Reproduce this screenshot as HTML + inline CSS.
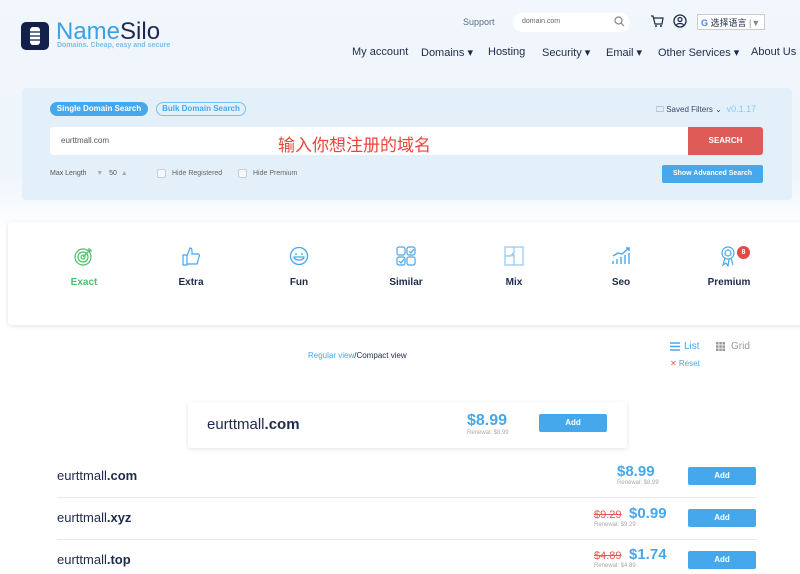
<!DOCTYPE html>
<html><head><meta charset="utf-8"><style>
*{box-sizing:border-box;margin:0;padding:0}
body{width:800px;height:574px;overflow:hidden;background:#fff;font-family:"Liberation Sans","Noto Sans CJK SC",sans-serif;color:#1e2a4a;position:relative}
.a{position:absolute;white-space:nowrap}
.hdr{position:absolute;left:0;top:0;width:800px;height:230px;background:linear-gradient(180deg,#f1f7fc 0%,#eef5fb 75%,#fff 100%)}
.nav{font-size:11px;top:46px}
.panel{left:22px;top:88px;width:770px;height:112px;background:#e4f0f9;border-radius:4px}
.btn{background:#46a8ec;color:#fff;font-weight:bold;text-align:center;border-radius:2px}
.lbl{font-size:10px;font-weight:bold;top:277px;text-align:center;width:80px}
.dom{font-size:13px}
.dom b{font-weight:bold}
.pr{color:#46a8ec;font-size:15px;font-weight:bold}
.ren{font-size:6px;color:#aaa}
.old{color:#e05a55;text-decoration:line-through;font-size:11px}
.sep{left:57px;width:700px;height:1px;background:#e6e9ee}
</style></head><body>
<div class="hdr"></div>
<div class="a" style="left:21px;top:22px;width:28px;height:28px;background:#12214a;border-radius:5px"></div>
<svg class="a" style="left:27px;top:26px" width="16" height="20"><rect x="3" y="1" width="10" height="18" rx="3" fill="#fff"/><path d="M3 6h10M3 10h10M3 14h10" stroke="#12214a" stroke-width="1.2"/></svg>
<div class="a" style="left:56px;top:18px;font-size:24px;color:#3aa0e8">Name<span style="color:#1c2a52">Silo</span></div>
<div class="a" style="left:57px;top:42px;font-size:7px;color:#7cbcec;font-weight:bold">Domains. Cheap, easy and secure</div>
<div class="a" style="left:463px;top:17px;font-size:9px;color:#5a6a85">Support</div>
<div class="a" style="left:513px;top:13px;width:117px;height:19px;background:#fff;border-radius:10px"></div>
<div class="a" style="left:522px;top:18px;font-size:7px;color:#666">domain.com</div>
<svg class="a" style="left:614px;top:16px" width="11" height="11"><circle cx="4.5" cy="4.5" r="3.5" stroke="#888" fill="none" stroke-width="1.2"/><path d="M7 7l3 3" stroke="#888" stroke-width="1.2"/></svg>
<svg class="a" style="left:650px;top:14px" width="14" height="14"><path d="M1 2h2l2 8h7l1-6H4" fill="none" stroke="#1e2a4a" stroke-width="1.2"/><circle cx="6" cy="12" r="1" fill="#1e2a4a"/><circle cx="11" cy="12" r="1" fill="#1e2a4a"/></svg>
<svg class="a" style="left:673px;top:14px" width="14" height="14"><circle cx="7" cy="7" r="6" stroke="#1e2a4a" fill="none" stroke-width="1.3"/><circle cx="7" cy="5.5" r="2" stroke="#1e2a4a" fill="none" stroke-width="1.2"/><path d="M3.5 11c1-2 6-2 7 0" stroke="#1e2a4a" fill="none" stroke-width="1.2"/></svg>
<div class="a" style="left:697px;top:14px;width:68px;height:16px;background:#fff;border:1px solid #ccc;font-size:9px;padding:1px 0 0 3px"><span style="color:#4285f4;font-weight:bold">G</span> 选择语言 <span style="color:#888">|▼</span></div>
<div class="a nav" style="left:352px">My account</div>
<div class="a nav" style="left:421px">Domains ▾</div>
<div class="a nav" style="left:488px">Hosting</div>
<div class="a nav" style="left:542px">Security ▾</div>
<div class="a nav" style="left:606px">Email ▾</div>
<div class="a nav" style="left:658px">Other Services ▾</div>
<div class="a nav" style="left:751px">About Us</div>
<div class="a panel"></div>
<div class="a" style="left:50px;top:102px;width:98px;height:14px;background:#46a8ec;border-radius:8px;color:#fff;font-size:8px;font-weight:bold;text-align:center;line-height:14px">Single Domain Search</div>
<div class="a" style="left:156px;top:102px;width:90px;height:14px;border:1px solid #7cc0f0;border-radius:8px;color:#46a8ec;font-size:8px;font-weight:bold;text-align:center;line-height:12px">Bulk Domain Search</div>
<div class="a" style="left:656px;top:104px;font-size:8px;color:#3a4a66">🗀 Saved Filters ⌄ <span style="color:#8cc8f0;font-size:9px">&nbsp;v0.1.17</span></div>
<div class="a" style="left:50px;top:127px;width:638px;height:28px;background:#fff;border-radius:3px 0 0 3px"></div>
<div class="a" style="left:61px;top:136px;font-size:8px;color:#555">eurttmall.com</div>
<div class="a" style="left:278px;top:131px;font-size:17px;color:#e8463c">输入你想注册的域名</div>
<div class="a" style="left:688px;top:127px;width:75px;height:28px;background:#df5b57;color:#fff;font-size:8px;font-weight:bold;text-align:center;line-height:28px;border-radius:0 3px 3px 0">SEARCH</div>
<div class="a" style="left:50px;top:170px;font-size:7px;color:#555">Max Length &nbsp;&nbsp;&nbsp;&nbsp;<span style="color:#aab">▼</span> &nbsp;&nbsp;50 &nbsp;<span style="color:#aab">▲</span></div>
<div class="a" style="left:157px;top:169px;width:9px;height:9px;border:1px solid #ccc;background:#f4f8fb;border-radius:2px"></div>
<div class="a" style="left:172px;top:170px;font-size:7px;color:#666">Hide Registered</div>
<div class="a" style="left:238px;top:169px;width:9px;height:9px;border:1px solid #ccc;background:#f4f8fb;border-radius:2px"></div>
<div class="a" style="left:253px;top:170px;font-size:7px;color:#666">Hide Premium</div>
<div class="a btn" style="left:662px;top:165px;width:101px;height:18px;font-size:7px;line-height:18px">Show Advanced Search</div>
<div class="a" style="left:8px;top:222px;width:800px;height:103px;background:#fff;box-shadow:0 1px 4px rgba(0,0,0,.12);border-radius:3px"></div>
<svg class="a" style="left:74px;top:246px" width="20" height="20"><g fill="none" stroke="#4cc168" stroke-width="1.2"><circle cx="9" cy="11" r="8"/><circle cx="9" cy="11" r="5"/><circle cx="9" cy="11" r="2"/><path d="M9 11l8-8M15 2v3h3"/></g></svg>
<svg class="a" style="left:181px;top:246px" width="20" height="20"><path d="M2 9h4v10H2zM6 10l3-8c2 0 2 2 2 4v2h6c1 0 2 1 1 3l-2 7H6" fill="none" stroke="#46a8ec" stroke-width="1.2"/></svg>
<svg class="a" style="left:289px;top:246px" width="20" height="20"><g fill="none" stroke="#46a8ec" stroke-width="1.3"><circle cx="10" cy="10" r="8.5"/><path d="M6 8h2M12 8h2M5 11h10c0 4-10 4-10 0z"/></g></svg>
<svg class="a" style="left:396px;top:246px" width="20" height="20"><g fill="none" stroke="#46a8ec" stroke-width="1.2"><rect x="1" y="1" width="8" height="8" rx="2"/><rect x="11" y="1" width="8" height="8" rx="2"/><rect x="1" y="11" width="8" height="8" rx="2"/><rect x="11" y="11" width="8" height="8" rx="2"/><path d="M13 5l2 2 3-4M3 15l2 2 3-4"/></g></svg>
<svg class="a" style="left:504px;top:246px" width="20" height="20"><g fill="none" stroke="#8cc8f0" stroke-width="1.2"><rect x="1" y="1" width="18" height="18"/><path d="M10 1v6c-2 0-2 3 0 3v9M1 10h6c0-2 3-2 3 0"/></g></svg>
<svg class="a" style="left:611px;top:245px" width="20" height="20"><g fill="none" stroke="#46a8ec" stroke-width="1.4"><path d="M2 19v-3M6 19v-5M10 19v-7M14 19v-9M18 19v-11M2 11l5-3 4 1 7-6M15 3h3v3"/></g></svg>
<svg class="a" style="left:719px;top:245px" width="20" height="22"><g fill="none" stroke="#46a8ec" stroke-width="1.2"><circle cx="9" cy="8" r="6"/><circle cx="9" cy="8" r="3"/><path d="M6 13l-2 7 3-2 2 3 1-7M12 13l2 7"/></g></svg>
<div class="a" style="left:737px;top:246px;width:13px;height:13px;border-radius:50%;background:#df4b45;color:#fff;font-size:7px;font-weight:bold;text-align:center;line-height:13px">8</div>
<div class="a lbl" style="left:44px;color:#4cc168">Exact</div>
<div class="a lbl" style="left:151px">Extra</div>
<div class="a lbl" style="left:259px">Fun</div>
<div class="a lbl" style="left:366px">Similar</div>
<div class="a lbl" style="left:474px">Mix</div>
<div class="a lbl" style="left:581px">Seo</div>
<div class="a lbl" style="left:689px">Premium</div>
<div class="a" style="left:308px;top:351px;font-size:8px;color:#46a8ec">Regular view<span style="color:#1e2a4a">/Compact view</span></div>
<svg class="a" style="left:670px;top:342px" width="10" height="9"><path d="M0 1h10M0 4.5h10M0 8h10" stroke="#46a8ec" stroke-width="1.6"/></svg>
<div class="a" style="left:684px;top:341px;font-size:10px;color:#46a8ec">List</div>
<svg class="a" style="left:716px;top:342px" width="9" height="9"><g fill="#999"><rect x="0" y="0" width="2.5" height="2.5"/><rect x="3.3" y="0" width="2.5" height="2.5"/><rect x="6.5" y="0" width="2.5" height="2.5"/><rect x="0" y="3.3" width="2.5" height="2.5"/><rect x="3.3" y="3.3" width="2.5" height="2.5"/><rect x="6.5" y="3.3" width="2.5" height="2.5"/><rect x="0" y="6.5" width="2.5" height="2.5"/><rect x="3.3" y="6.5" width="2.5" height="2.5"/><rect x="6.5" y="6.5" width="2.5" height="2.5"/></g></svg>
<div class="a" style="left:731px;top:341px;font-size:10px;color:#999">Grid</div>
<div class="a" style="left:670px;top:359px;font-size:8px;color:#46a8ec"><span style="color:#e05a55">✕</span> Reset</div>
<div class="a" style="left:188px;top:402px;width:439px;height:46px;background:#fff;box-shadow:0 1px 4px rgba(0,0,0,.12);border-radius:3px"></div>
<div class="a dom" style="left:207px;top:416px;font-size:15px">eurttmall<b>.com</b></div>
<div class="a pr" style="left:467px;top:412px;font-size:16px">$8.99</div>
<div class="a ren" style="left:467px;top:430px">Renewal: $8.99</div>
<div class="a btn" style="left:539px;top:414px;width:68px;height:18px;font-size:8px;line-height:18px">Add</div>
<div class="a dom" style="left:57px;top:468px">eurttmall<b>.com</b></div>
<div class="a pr" style="left:617px;top:463px">$8.99</div>
<div class="a ren" style="left:617px;top:480px">Renewal: $8.99</div>
<div class="a btn" style="left:688px;top:467px;width:68px;height:18px;font-size:8px;line-height:18px">Add</div>
<div class="a sep" style="top:497px"></div>
<div class="a dom" style="left:57px;top:510px">eurttmall<b>.xyz</b></div>
<div class="a old" style="left:594px;top:509px">$9.29</div>
<div class="a pr" style="left:629px;top:505px">$0.99</div>
<div class="a ren" style="left:594px;top:522px">Renewal: $9.29</div>
<div class="a btn" style="left:688px;top:509px;width:68px;height:18px;font-size:8px;line-height:18px">Add</div>
<div class="a sep" style="top:539px"></div>
<div class="a dom" style="left:57px;top:552px">eurttmall<b>.top</b></div>
<div class="a old" style="left:594px;top:550px">$4.89</div>
<div class="a pr" style="left:629px;top:546px">$1.74</div>
<div class="a ren" style="left:594px;top:563px">Renewal: $4.89</div>
<div class="a btn" style="left:688px;top:551px;width:68px;height:18px;font-size:8px;line-height:18px">Add</div>
</body></html>
